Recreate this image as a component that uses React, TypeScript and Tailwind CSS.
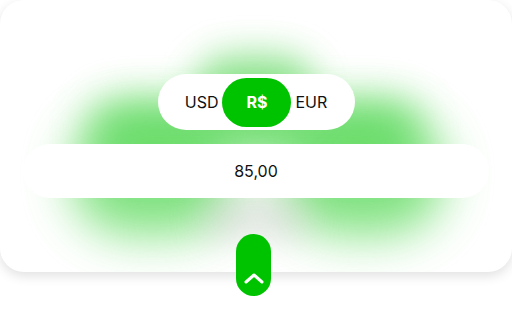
import React from "react"

const font = { fontFamily: "Inter, 'Noto Sans', sans-serif" }

export default function App() {
  return (
    <div className="w-[512px] h-[320px] bg-white overflow-hidden" style={font}>
      <div className="relative h-[272px] w-[512px] rounded-[24px] bg-white shadow-[0_4px_12px_rgba(0,0,0,0.12)]">
        {/* glow */}
        <div className="absolute inset-0 overflow-hidden rounded-[24px] pointer-events-none">
          <div className="absolute left-[70px] top-[115px] w-[165px] h-[120px] rounded-full bg-[#55d855] opacity-75 blur-[24px]" />
          <div className="absolute left-[280px] top-[115px] w-[165px] h-[120px] rounded-full bg-[#55d855] opacity-75 blur-[24px]" />
          <div className="absolute left-[90px] top-[100px] w-[330px] h-[60px] rounded-full bg-[#55d855] opacity-70 blur-[20px]" />
          <div className="absolute left-[195px] top-[55px] w-[120px] h-[70px] rounded-full bg-[#44d044] opacity-60 blur-[18px]" />
          <div className="absolute left-[200px] top-[195px] w-[110px] h-[45px] rounded-full bg-[#c8c8c8] opacity-40 blur-[16px]" />
        </div>

        <div className="relative flex flex-col items-center pt-[74px]">
          <div className="flex h-[56px] w-[197px] items-center justify-center gap-[4px] rounded-full bg-white">
            <span className="text-[16px] text-[#111]">USD</span>
            <span className="flex h-[49px] w-[69px] items-center justify-center rounded-full bg-[#00c300] text-[16px] font-bold text-white">
              R$
            </span>
            <span className="text-[16px] text-[#111]">EUR</span>
          </div>
          <div className="mt-[14px] flex h-[54px] w-[466px] items-center justify-center rounded-full bg-white">
            <span className="text-[16px] text-[#111]">85,00</span>
          </div>
        </div>

        <button className="absolute left-[236px] top-[234px] flex h-[62px] w-[35px] items-end justify-center rounded-full bg-[#00c300] pb-[12px]">
          <svg width="20" height="12" viewBox="0 0 20 12" fill="none">
            <path d="M2 10 L10 3 L18 10" stroke="white" strokeWidth="3" strokeLinecap="round" strokeLinejoin="round" />
          </svg>
        </button>
      </div>
    </div>
  )
}
